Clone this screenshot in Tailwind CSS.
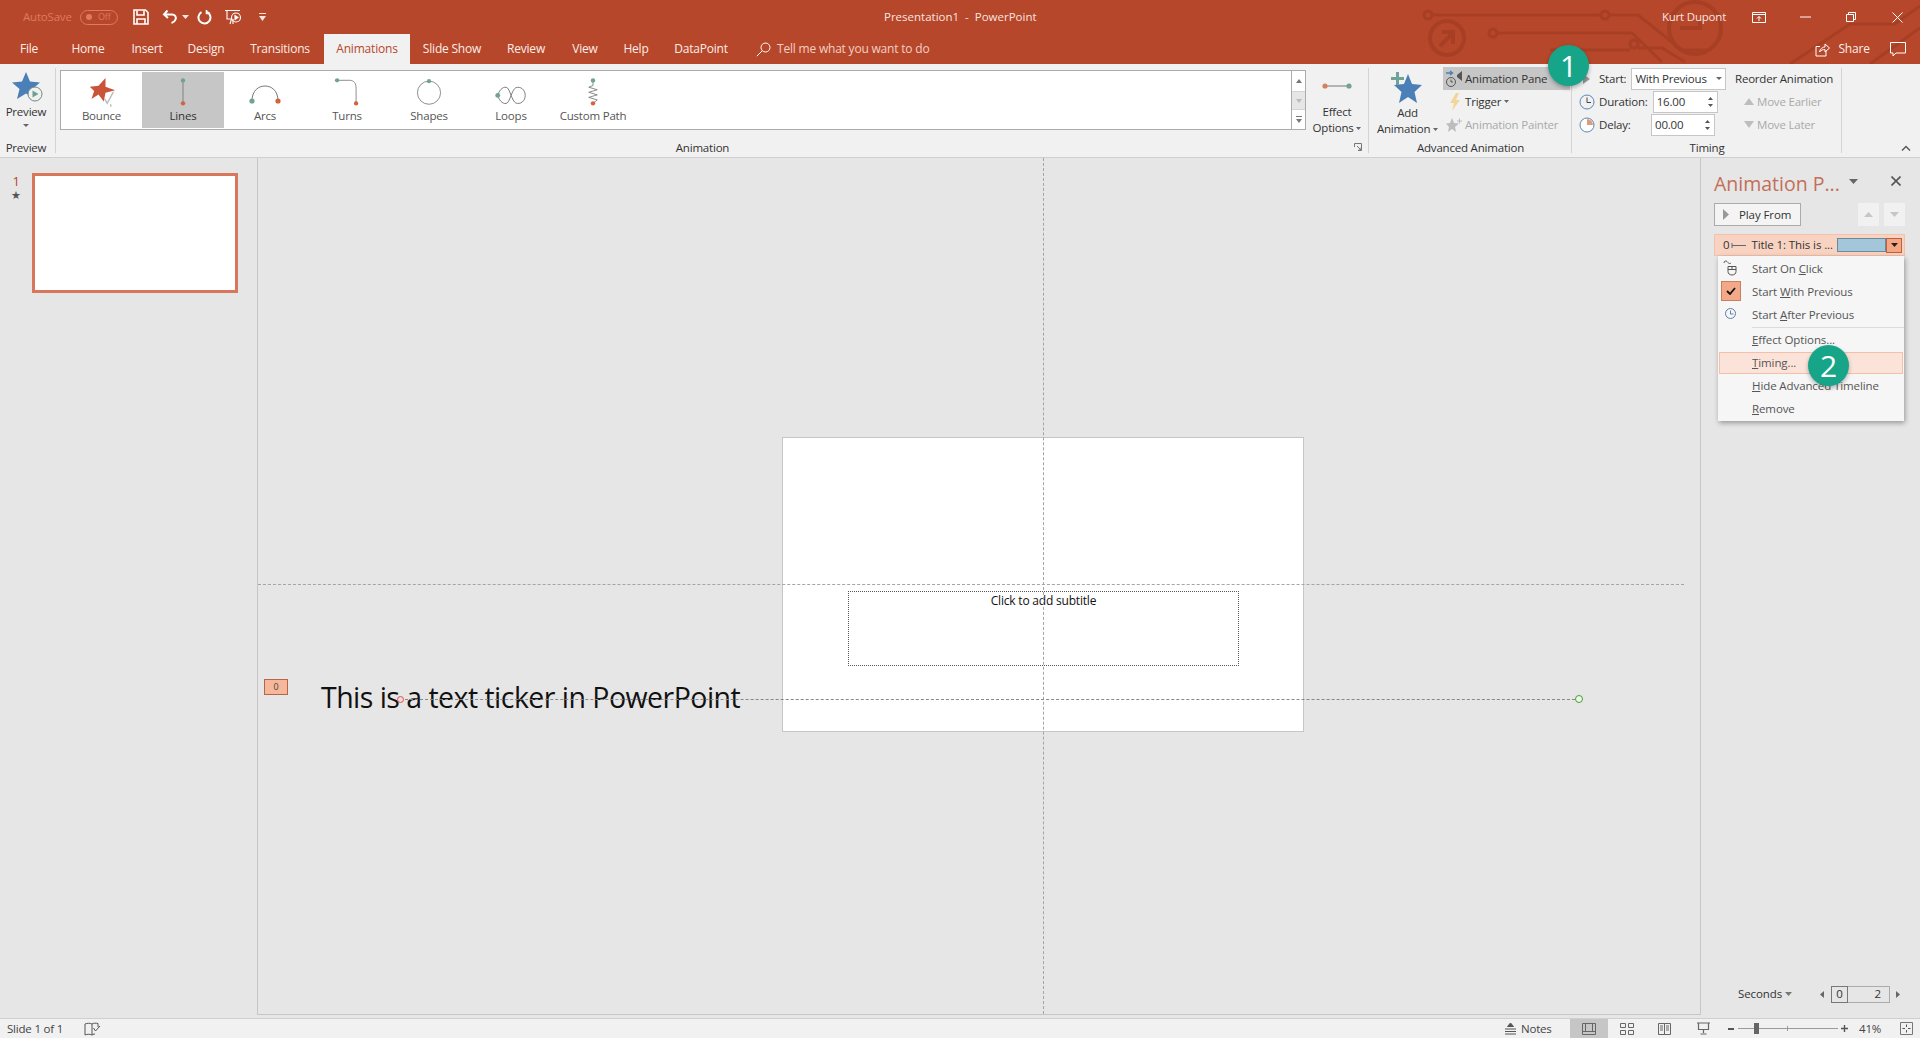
<!DOCTYPE html>
<html>
<head>
<meta charset="utf-8">
<script src="https://cdn.jsdelivr.net/npm/@tailwindcss/browser@4"></script>
</head>
<body class="m-0 overflow-hidden">
<div class="flex h-[1038px] w-[1920px] flex-col overflow-hidden bg-[#e6e6e6] font-['Open_Sans',sans-serif] text-[11.5px] tracking-[-0.2px] text-[#333]">

  <!-- red header -->
  <div class="relative h-[64px] shrink-0 overflow-hidden bg-[#b7472a]">
    <svg class="absolute left-[1400px] top-0" width="520" height="64" fill="none" stroke="#a73f25" stroke-width="3">
      <circle cx="28" cy="15" r="4"/><path d="M32 15H201"/><circle cx="205" cy="15" r="4"/><path d="M209 15H238L282 50H310"/>
      <circle cx="93" cy="33" r="4"/><path d="M97 33H232L262 62"/><circle cx="234" cy="44" r="4"/><path d="M150 50H230M238 48H262L285 62"/>
      <circle cx="47" cy="38" r="17" stroke-width="4"/><path d="M40 46L52 34M42 32H53V44" stroke-width="4"/>
      <circle cx="295" cy="28" r="26" stroke-width="4"/><path d="M280 28H300V20" stroke-width="4"/>
      <path d="M390 64L450 24H495L520 6M470 64L520 28"/>
    </svg>

    <div class="relative flex h-[34px] items-center text-[#f6e5e0]">
      <span class="ml-[23px] w-[54px] text-[#de7a60]">AutoSave</span>
      <span class="ml-[3px] flex h-[15px] w-[38px] items-center rounded-full border border-[#de7a60] text-[9px] text-[#de7a60]"><span class="ml-[5px] mr-[6px] h-[6px] w-[6px] rounded-full bg-[#de7a60]"></span>Off</span>
      <svg class="ml-[15px]" width="16" height="16" viewBox="0 0 16 16" fill="none" stroke="#fff" stroke-width="1.6"><path d="M1 1H12.5L15 3.5V15H1Z"/><path d="M4 1.5V6H11V1.5M4 15V10H12V15"/></svg>
      <svg class="ml-[13px]" width="17" height="16" viewBox="0 0 17 16" fill="none" stroke="#fff" stroke-width="2"><path d="M5.5 1.5L2 5.5L6 9M2.5 5.5H10C13 5.5 14.5 8 13.5 10.5C13 12 11.5 13.5 9.5 14"/></svg>
      <svg class="ml-[3px]" width="7" height="4"><path d="M0 0H7L3.5 4Z" fill="#f6e5e0"/></svg>
      <svg class="ml-[7px]" width="16" height="16" viewBox="0 0 16 16" fill="none" stroke="#fff" stroke-width="2"><path d="M5.5 3.2A6 6 0 1 0 11 3"/><path d="M10.5 1V4.5H14" stroke-width="1.6"/></svg>
      <svg class="ml-[13px]" width="18" height="18" viewBox="0 0 18 18" fill="none" stroke="#fff" stroke-width="1.1"><path d="M0 2.5H15M2 2.5V11H7M6.5 11L5 16M8 11V16"/><circle cx="11" cy="9.5" r="4.5"/><path d="M10 7.5V11.5L13 9.5Z" fill="#fff"/></svg>
      <svg class="ml-[16px]" width="7" height="8"><path d="M0 0H7V1H0ZM0 3H7L3.5 8Z" fill="#f6e5e0"/></svg>
      <span class="ml-[618px] w-[150px] whitespace-nowrap text-center tracking-normal">Presentation1&nbsp; -&nbsp; PowerPoint</span>
      <span class="ml-[627px] w-[66px] whitespace-nowrap text-center">Kurt Dupont</span>
      <svg class="ml-[25px]" width="14" height="11" viewBox="0 0 14 11" fill="none" stroke="#fff"><path d="M.5 .5H13.5V10.5H.5ZM.5 2.5H13.5M7 9V4.5M5 6.5L7 4.5L9 6.5"/></svg>
      <svg class="ml-[34px]" width="11" height="2"><path d="M0 1H11" stroke="#fff"/></svg>
      <svg class="ml-[35px]" width="10" height="10" viewBox="0 0 10 10" fill="none" stroke="#fff"><path d="M.5 2.5H7.5V9.5H.5ZM2.5 2.5V.5H9.5V7.5H7.5"/></svg>
      <svg class="ml-[36px]" width="11" height="11" viewBox="0 0 11 11" fill="none" stroke="#fff"><path d="M.5 .5L10.5 10.5M10.5 .5L.5 10.5"/></svg>
    </div>

    <div class="relative flex h-[30px] items-stretch text-[12px] text-[#fbeee9]">
      <span class="flex w-[58px] items-center justify-center">File</span>
      <span class="flex w-[60px] items-center justify-center">Home</span>
      <span class="flex w-[58px] items-center justify-center">Insert</span>
      <span class="flex w-[60px] items-center justify-center">Design</span>
      <span class="flex w-[88px] items-center justify-center">Transitions</span>
      <span class="flex w-[86px] items-center justify-center bg-[#f1f1f1] text-[#b7472a]">Animations</span>
      <span class="flex w-[84px] items-center justify-center">Slide Show</span>
      <span class="flex w-[64px] items-center justify-center">Review</span>
      <span class="flex w-[54px] items-center justify-center">View</span>
      <span class="flex w-[48px] items-center justify-center">Help</span>
      <span class="flex w-[82px] items-center justify-center">DataPoint</span>
      <svg class="ml-[14px] self-center" width="15" height="15" viewBox="0 0 15 15" fill="none" stroke="#fff"><circle cx="9.5" cy="5.5" r="4.5"/><path d="M6.3 8.7L.8 14.2"/></svg>
      <span class="ml-[6px] flex items-center text-[#f3cfc4]">Tell me what you want to do</span>
      <svg class="ml-[886px] self-center" width="15" height="15" viewBox="0 0 15 15" fill="none" stroke="#fff"><path d="M11 8.5V14H1V4.5H5M4.5 10C5 6.5 8 5 10 5V2L14.5 6L10 10V7.5C8 7.5 6 8 4.5 10Z"/></svg>
      <span class="ml-[8px] flex items-center">Share</span>
      <svg class="ml-[20px] self-center" width="16" height="15" viewBox="0 0 16 15" fill="none" stroke="#fff"><path d="M.5 .5H15.5V11H6L3 14V11H.5Z"/></svg>
    </div>
  </div>

  <!-- ribbon -->
  <div class="flex h-[94px] shrink-0 border-b border-[#cfcfcf] bg-[#f1f1f1]">
    <!-- preview -->
    <div class="relative flex w-[58px] shrink-0 flex-col items-center pr-[6px] before:absolute before:right-[2px] before:top-[4px] before:bottom-[4px] before:w-px before:bg-[#d4d4d4]">
      <svg class="ml-[6px] mt-[7px]" width="34" height="32" viewBox="0 0 34 32"><path d="M14 1L18 10.500L28 11.500L20.500 18L23 28L14 22.500L5 28L7.500 18L0 11.500L10 10.500Z" fill="#4a7fb8"/><circle cx="23" cy="23" r="7" fill="#f1f1f1" stroke="#6e8d84"/><path d="M20.500 19.500V26.500L26.500 23Z" fill="#70a090"/></svg>
      <span class="mt-[1px] leading-[16px]">Preview</span>
      <svg class="mt-[4px]" width="6" height="3"><path d="M0 0H6L3 3Z" fill="#666"/></svg>
      <span class="mt-auto h-[16px] leading-[14px]">Preview</span>
    </div>
    <!-- animation -->
    <div class="relative flex w-[1311px] shrink-0 flex-col before:absolute before:right-0 before:top-[4px] before:bottom-[4px] before:w-px before:bg-[#d4d4d4]">
      <div class="flex">
        <div class="ml-[2px] mt-[6px] flex h-[60px] w-[1232px] shrink-0 border border-[#ababab] bg-white pt-[1px]">
          <div class="flex h-[56px] w-[81px] flex-col items-center">
            <svg class="mt-[5px]" width="34" height="34" viewBox="0 0 34 34"><path d="M3 11L13 10L21 1L21 11L32 15L21 18L19 28L13 20L5 25L8 16Z" fill="#c9543a"/><path d="M20 25L23 30L30 17M27 31V34" fill="none" stroke="#bbb" stroke-width="1.600"/></svg>
            <span class="mt-auto pb-[4px] text-[#555]">Bounce</span>
          </div>
          <div class="flex h-[56px] w-[82px] flex-col items-center bg-[#c6c6c6]">
            <svg class="mt-[5px]" width="10" height="35" viewBox="0 0 10 35"><path d="M5 4V30" stroke="#777"/><circle cx="5" cy="4" r="2.600" fill="#6fa397"/><circle cx="5" cy="31" r="2.600" fill="#d16340"/></svg>
            <span class="mt-auto pb-[4px]">Lines</span>
          </div>
          <div class="flex h-[56px] w-[82px] flex-col items-center">
            <svg class="mt-[11px]" width="32" height="22" viewBox="0 0 32 22"><path d="M3 18C3 7 10 3 16 3S29 7 29 18" fill="none" stroke="#777"/><circle cx="3" cy="18" r="2.600" fill="#6fa397"/><circle cx="29" cy="18" r="2.600" fill="#d16340"/></svg>
            <span class="mt-auto pb-[4px] text-[#555]">Arcs</span>
          </div>
          <div class="flex h-[56px] w-[82px] flex-col items-center">
            <svg class="mt-[5px]" width="30" height="36" viewBox="0 0 30 36"><path d="M3 4H18C24 4 26 8 26 14V32" fill="none" stroke="#777"/><circle cx="3" cy="4" r="2.600" fill="#6fa397"/><circle cx="26" cy="32" r="2.600" fill="#d16340"/></svg>
            <span class="mt-auto pb-[4px] text-[#555]">Turns</span>
          </div>
          <div class="flex h-[56px] w-[82px] flex-col items-center">
            <svg class="mt-[5px]" width="30" height="36" viewBox="0 0 30 36"><circle cx="15" cy="19" r="14" fill="none" stroke="#777"/><circle cx="15" cy="5" r="2.600" fill="#6fa397"/></svg>
            <span class="mt-auto pb-[4px] text-[#555]">Shapes</span>
          </div>
          <div class="flex h-[56px] w-[82px] flex-col items-center">
            <svg class="mt-[12px]" width="34" height="24" viewBox="0 0 34 24"><path d="M3 12C5 5 10 2 13 4C16 6 18 18 22 20C27 22 32 18 32 12S27 2 22 4C18 6 16 18 13 20C10 22 5 19 3 12Z" fill="none" stroke="#777"/><circle cx="3" cy="12" r="2.600" fill="#6fa397"/></svg>
            <span class="mt-auto pb-[4px] text-[#555]">Loops</span>
          </div>
          <div class="flex h-[56px] w-[82px] flex-col items-center">
            <svg class="mt-[5px]" width="14" height="35" viewBox="0 0 14 35"><path d="M7 4V10L2 12L12 15L2 18L12 21L2 24L12 27L7 31" fill="none" stroke="#777"/><circle cx="7" cy="4" r="2.600" fill="#6fa397"/><circle cx="7" cy="31" r="2.600" fill="#d16340"/></svg>
            <span class="mt-auto whitespace-nowrap pb-[4px] text-[#555]">Custom Path</span>
          </div>
        </div>
        <div class="mt-[6px] flex h-[60px] w-[14px] shrink-0 flex-col border-y border-r border-[#ababab]">
          <span class="flex h-[20px] items-center justify-center bg-white"><svg width="6" height="4"><path d="M0 4H6L3 0Z" fill="#777"/></svg></span>
          <span class="flex h-[19px] items-center justify-center border-y border-[#d4d4d4] bg-[#e6e6e6]"><svg width="6" height="4"><path d="M0 0H6L3 4Z" fill="#bbb"/></svg></span>
          <span class="flex flex-1 items-center justify-center bg-white"><svg width="6" height="7"><path d="M0 0H6V1H0ZM0 3H6L3 7Z" fill="#777"/></svg></span>
        </div>
        <div class="flex w-[62px] shrink-0 flex-col items-center">
          <svg class="mt-[18px]" width="30" height="8" viewBox="0 0 30 8"><path d="M3 4H27" stroke="#777"/><circle cx="3" cy="4" r="2.600" fill="#d1835f"/><circle cx="27" cy="4" r="2.600" fill="#6fa397"/></svg>
          <span class="mt-[14px] leading-[16px]">Effect</span>
          <span class="whitespace-nowrap leading-[16px]">Options <svg class="inline align-middle" width="5" height="3"><path d="M0 0H5L2.500 3Z" fill="#666"/></svg></span>
        </div>
      </div>
      <div class="relative mt-auto flex h-[16px] justify-center pr-[22px] leading-[14px]">
        Animation
        <svg class="absolute right-[7px] top-[2px]" width="8" height="8" viewBox="0 0 8 8" fill="none" stroke="#777"><path d="M.5 4V.5H7.500V7.500H4M3 3L7 7M4.500 7H7V4.500"/></svg>
      </div>
    </div>
    <!-- advanced animation -->
    <div class="relative flex w-[203px] shrink-0 flex-col before:absolute before:right-0 before:top-[4px] before:bottom-[4px] before:w-px before:bg-[#d4d4d4]">
      <div class="flex">
        <div class="flex w-[74px] flex-col items-center">
          <svg class="mt-[7px]" width="32" height="32" viewBox="0 0 32 32"><path d="M18 3L22 13L32 14L24.500 21L27 32L18 26L9 32L11.500 21L4 14L14 13Z" fill="#4a7fb8"/><path d="M1 6H6V1H9V6H14V9H9V14H6V9H1Z" fill="#6fa397"/></svg>
          <span class="ml-[3px] mt-[2px] leading-[16px]">Add</span>
          <span class="ml-[3px] whitespace-nowrap leading-[16px]">Animation <svg class="inline align-middle" width="5" height="3"><path d="M0 0H5L2.500 3Z" fill="#666"/></svg></span>
        </div>
        <div class="mt-[3px] flex w-[127px] flex-col">
          <div class="flex h-[23px] items-center bg-[#c6c6c6]">
            <svg class="ml-[2px]" width="18" height="18" viewBox="0 0 18 18" fill="none"><path d="M1 3H7M5 1L7.500 3L5 5" stroke="#4a7fb8" stroke-width="1.400"/><circle cx="6" cy="12" r="4.500" stroke="#555"/><path d="M6 9.500V12H8" stroke="#555"/><path d="M12 5L17 1V11L12 7Z" fill="#555"/></svg>
            <span class="ml-[2px] whitespace-nowrap">Animation Pane</span>
          </div>
          <div class="flex h-[23px] items-center">
            <svg class="ml-[6px]" width="12" height="18" viewBox="0 0 12 18"><path d="M7 0L1 10H5L3 18L11 7H7L10 0Z" fill="#f3d59a"/></svg>
            <span class="ml-[4px]">Trigger</span>
            <svg class="ml-[3px]" width="5" height="3"><path d="M0 0H5L2.500 3Z" fill="#666"/></svg>
          </div>
          <div class="flex h-[23px] items-center text-[#a9a9a9]">
            <svg class="ml-[3px]" width="17" height="16" viewBox="0 0 17 16"><path d="M6 1L8 6L13 6.500L9 10L10 15L6 12L2 15L3 10L0 6.500L4 6Z" fill="#bdbdbd"/><path d="M11 4H16M13.500 1.500V6.500" stroke="#bdbdbd"/></svg>
            <span class="ml-[2px] whitespace-nowrap">Animation Painter</span>
          </div>
        </div>
      </div>
      <div class="mt-auto h-[16px] text-center leading-[14px]">Advanced Animation</div>
    </div>
    <!-- timing -->
    <div class="relative flex w-[270px] shrink-0 flex-col before:absolute before:right-0 before:top-[4px] before:bottom-[4px] before:w-px before:bg-[#d4d4d4]">
      <div class="mt-[3px] flex">
        <div class="flex w-[158px] flex-col">
          <div class="flex h-[23px] items-center">
            <svg class="ml-[11px]" width="7" height="10"><path d="M0 0L7 5L0 10Z" fill="#999"/></svg>
            <span class="ml-[9px]">Start:</span>
            <span class="ml-[5px] flex h-[22px] w-[95px] items-center justify-between border border-[#c6c6c6] bg-white px-[3px] text-[11.500px]">With Previous<svg width="6" height="3"><path d="M0 0H6L3 3Z" fill="#666"/></svg></span>
          </div>
          <div class="flex h-[23px] items-center">
            <svg class="ml-[7px]" width="16" height="16" viewBox="0 0 16 16" fill="none" stroke="#5588b8"><circle cx="8" cy="8" r="7"/><path d="M8 3.500V8.500H12" stroke="#444"/></svg>
            <span class="ml-[4px]">Duration:</span>
            <span class="ml-[5px] flex h-[22px] w-[65px] items-center justify-between border border-[#c6c6c6] bg-white pl-[3px] pr-[4px]">16.00<span class="flex flex-col gap-[4px]"><svg class="block" width="5" height="3"><path d="M0 3H5L2.500 0Z" fill="#555"/></svg><svg class="block" width="5" height="3"><path d="M0 0H5L2.500 3Z" fill="#555"/></svg></span></span>
          </div>
          <div class="flex h-[23px] items-center">
            <svg class="ml-[7px]" width="16" height="16" viewBox="0 0 16 16"><circle cx="8" cy="8" r="7" fill="#fff" stroke="#5588b8"/><path d="M8 2A6 6 0 0 1 14 8H8Z" fill="#e39a77"/></svg>
            <span class="ml-[4px] w-[52px]">Delay:</span>
            <span class="flex h-[22px] w-[64px] items-center justify-between border border-[#c6c6c6] bg-white pl-[3px] pr-[4px]">00.00<span class="flex flex-col gap-[4px]"><svg class="block" width="5" height="3"><path d="M0 3H5L2.500 0Z" fill="#555"/></svg><svg class="block" width="5" height="3"><path d="M0 0H5L2.500 3Z" fill="#555"/></svg></span></span>
          </div>
        </div>
        <div class="ml-[5px] flex w-[107px] flex-col">
          <div class="flex h-[23px] items-center whitespace-nowrap">Reorder Animation</div>
          <div class="flex h-[23px] items-center text-[#a9a9a9]"><svg class="ml-[9px]" width="10" height="7"><path d="M0 7H10L5 0Z" fill="#bdbdbd"/></svg><span class="ml-[3px]">Move Earlier</span></div>
          <div class="flex h-[23px] items-center text-[#a9a9a9]"><svg class="ml-[9px]" width="10" height="7"><path d="M0 0H10L5 7Z" fill="#bdbdbd"/></svg><span class="ml-[3px]">Move Later</span></div>
        </div>
      </div>
      <div class="mt-auto h-[16px] text-center leading-[14px]">Timing</div>
    </div>
    <div class="flex flex-1 items-end justify-end pb-[6px] pr-[9px]">
      <svg width="10" height="6" viewBox="0 0 10 6" fill="none" stroke="#555" stroke-width="1.400"><path d="M1 5.500L5 1.500L9 5.500"/></svg>
    </div>
  </div>

  <!-- workspace -->
  <div class="flex min-h-0 flex-1">
    <!-- thumbnails -->
    <div class="mb-[3px] flex w-[258px] shrink-0 border-r border-[#c6c6c6]">
      <div class="w-[32px] pt-[16px] text-center text-[13px] leading-[14px] text-[#b7472a]">1<div class="mt-[2px] text-[11px] leading-[10px] text-[#555]">★</div></div>
      <div class="mt-[15px] h-[120px] w-[206px] border-[3px] border-[#d8775c] bg-white"></div>
    </div>
    <!-- canvas -->
    <div class="relative mb-[3px] min-w-0 flex-1 border-b border-[#c6c6c6]">
      <div class="absolute left-[524px] top-[279px] h-[295px] w-[522px] border border-[#c6c6c6] bg-white"></div>
      <div class="absolute left-[590px] top-[433px] flex h-[75px] w-[391px] justify-center border border-dotted border-[#555] text-[12px] leading-[14px] text-[#111]"><span class="mt-[2px]">Click to add subtitle</span></div>
      <div class="absolute left-0 top-[426px] w-[1426px] border-t border-dashed border-[#a5a5a5]"></div>
      <div class="absolute left-[785px] top-0 h-[856px] border-l border-dashed border-[#a5a5a5]"></div>
      <div class="absolute left-[6px] top-[521px] flex h-[16px] w-[24px] items-center justify-center border border-[#b5664a] bg-[#f6b79a] text-[9px] text-[#444]">0</div>
      <div class="absolute left-[63px] top-[519px] whitespace-nowrap text-[28.500px] leading-[40px] tracking-[-0.53px] text-[#111]">This is a text ticker in PowerPoint</div>
      <div class="absolute left-[142px] top-[541px] w-[1175px] border-t border-dashed border-[#888]"></div>
      <div class="absolute left-[139px] top-[538px] h-[7px] w-[7px] rounded-full border border-[#d9534f] bg-[#f3d9d5]"></div>
      <div class="absolute left-[1317px] top-[537px] h-[8px] w-[8px] rounded-full border border-[#46a030] bg-[#eef6ec]"></div>
    </div>
    <!-- animation pane -->
    <div class="relative mb-[3px] flex w-[220px] shrink-0 flex-col border-l border-[#c6c6c6] pl-[13px] pr-[15px] tracking-[-0.1px]">
      <div class="flex h-[45px] items-center pt-[7px]">
        <span class="whitespace-nowrap text-[19.500px] tracking-normal text-[#c26f58]">Animation P...</span>
        <svg class="ml-[9px] mb-[6px]" width="9" height="5"><path d="M0 0H9L4.500 5Z" fill="#666"/></svg>
        <svg class="ml-[33px] mb-[6px]" width="10" height="10" viewBox="0 0 10 10" fill="none" stroke="#555" stroke-width="1.600"><path d="M.5 .5L9.500 9.500M9.500 .5L.5 9.500"/></svg>
      </div>
      <div class="flex h-[23px] items-stretch">
        <span class="flex w-[87px] items-center border border-[#ababab] bg-[#f4f4f4] pl-[8px]"><svg width="6" height="11"><path d="M0 0L6 5.500L0 11Z" fill="#999"/></svg><span class="ml-[10px]">Play From</span></span>
        <span class="ml-[57px] flex w-[21px] items-center justify-center bg-[#f1f1f1]"><svg width="9" height="5"><path d="M0 5H9L4.500 0Z" fill="#c6c6c6"/></svg></span>
        <span class="ml-[5px] flex w-[21px] items-center justify-center bg-[#f1f1f1]"><svg width="9" height="5"><path d="M0 0H9L4.500 5Z" fill="#c6c6c6"/></svg></span>
      </div>
      <div class="mt-[8px] flex h-[22px] w-[191px] items-center border border-[#f3c2ad] bg-[#f9d3c2] pl-[8px]">
        <span>0</span>
        <svg class="ml-[2px]" width="15" height="7"><path d="M1 1V6M1 3.500H15" stroke="#666"/></svg>
        <span class="ml-[5px] w-[86px] whitespace-nowrap">Title 1: This is ...</span>
        <span class="h-[14px] w-[49px] border border-[#6a8a9e] bg-[#a3c6db]"></span>
        <span class="flex h-[15px] w-[16px] items-center justify-center border border-[#c0603f] bg-[#f5a683]"><svg width="7" height="4"><path d="M0 0H7L3.500 4Z" fill="#222"/></svg></span>
      </div>
      <!-- context menu -->
      <div class="absolute left-[17px] top-[98px] w-[186px] bg-[#f6f6f6] py-[1px] text-[#555] shadow-[1px_2px_5px_rgba(0,0,0,0.35)]">
        <div class="flex h-[23px] items-center pl-[34px]">Start On&nbsp;<u>C</u>lick</div>
        <div class="relative flex h-[23px] items-center pl-[34px]">
          <span class="absolute left-[3px] top-[1px] flex h-[20px] w-[20px] items-center justify-center border border-[#c9805f] bg-[#f3a988]"><svg width="10" height="8" viewBox="0 0 10 8" fill="none" stroke="#111" stroke-width="1.800"><path d="M1 4L4 7L9 1"/></svg></span>
          Start&nbsp;<u>W</u>ith Previous
        </div>
        <div class="flex h-[23px] items-center pl-[34px]">Start&nbsp;<u>A</u>fter Previous</div>
        <div class="mt-[1px] ml-[34px] border-t border-[#dcdcdc]"></div>
        <div class="mb-[1px] flex h-[23px] items-center pl-[34px]"><u>E</u>ffect Options...</div>
        <div class="mx-[1px] flex h-[22px] items-center border border-[#f4c0aa] bg-[#fce3da] pl-[32px]"><u>T</u>iming...</div>
        <div class="flex h-[23px] items-center pl-[34px]"><u>H</u>ide Advanced Timeline</div>
        <div class="flex h-[23px] items-center pl-[34px]"><u>R</u>emove</div>
        <svg class="absolute left-[5px] top-[4px]" width="14" height="16" viewBox="0 0 14 16" fill="none" stroke="#555"><path d="M5 6.500H13V11.500C13 13.500 11.500 15 9 15S5 13.500 5 11.500ZM5 9.500H13M9 6.500V9.500M1 3C1 1 3 .5 4 1.500S6 4.500 8 3"/></svg>
        <svg class="absolute left-[7px] top-[52px]" width="11" height="11" viewBox="0 0 11 11" fill="none" stroke="#5d7ea5"><circle cx="5.500" cy="5.500" r="5"/><path d="M5.500 2.500V6H8.500"/></svg>
      </div>
      <div class="mt-auto mb-[11px] flex h-[20px] items-center">
        <span class="ml-[24px]">Seconds</span>
        <svg class="ml-[3px]" width="7" height="4"><path d="M0 0H7L3.500 4Z" fill="#777"/></svg>
        <svg class="ml-[28px]" width="4" height="7"><path d="M4 0V7L0 3.500Z" fill="#666"/></svg>
        <span class="ml-[7px] flex h-[17px] w-[59px] items-stretch border border-[#ababab]"><span class="-my-px -ml-px flex w-[17px] items-center justify-center border border-[#777]">0</span><span class="flex flex-1 items-center justify-end pr-[8px]">2</span></span>
        <svg class="ml-[6px]" width="4" height="7"><path d="M0 0V7L4 3.500Z" fill="#666"/></svg>
      </div>
    </div>
  </div>

  <!-- status bar -->
  <div class="flex h-[20px] shrink-0 items-center border-t border-[#cfcfcf] bg-[#f1f1f1] text-[#444]">
    <span class="ml-[7px] w-[60px] whitespace-nowrap">Slide 1 of 1</span>
    <svg class="ml-[17px]" width="18" height="14" viewBox="0 0 18 14" fill="none" stroke="#555"><path d="M1 2C3 1 6 1 8 2V13C6 12 3 12 1 13ZM8 2C9.500 1 12 1 14 1.500V5M8 13L10 12H11M9.500 6L11.500 9L16 4"/></svg>
    <svg class="ml-[1402px]" width="13" height="13" viewBox="0 0 13 13" fill="none" stroke="#555"><path d="M1 7H12M1 9.500H12M1 12H12"/><path d="M3.500 4.500L6.500 1L9.500 4.500Z" fill="#555"/></svg>
    <span class="ml-[4px] w-[32px]">Notes</span>
    <span class="ml-[17px] flex h-[19px] w-[38px] items-center justify-center bg-[#c6c6c6]"><svg width="14" height="12" viewBox="0 0 14 12" fill="none" stroke="#666"><path d="M.5 .5H13.500V11.500H.5ZM3.500 .5V8.500H10.500V.5M.5 8.500H13.500"/></svg></span>
    <svg class="ml-[12px]" width="14" height="12" viewBox="0 0 14 12" fill="none" stroke="#666"><path d="M.5 .5H5.500V4.500H.5ZM8.500 .5H13.500V4.500H8.500ZM.5 7.500H5.500V11.500H.5ZM8.500 7.500H13.500V11.500H8.500Z"/></svg>
    <svg class="ml-[24px]" width="13" height="12" viewBox="0 0 13 12" fill="none" stroke="#666"><path d="M.5 .5H6.500V11.500H.5ZM6.500 .5H12.500V11.500H6.500ZM2 3H5M2 5H5M2 7H5M8 3H11M8 5H11M8 7H11"/></svg>
    <svg class="ml-[26px]" width="13" height="13" viewBox="0 0 13 13" fill="none" stroke="#666"><path d="M0 1H13M1.500 1.500V7.500H11.500V1.500M6.500 7.500V11M3.500 12H9.500" stroke-width="1.200"/></svg>
    <svg class="ml-[18px]" width="6" height="2"><path d="M0 1H6" stroke="#555" stroke-width="2"/></svg>
    <span class="relative ml-[4px] h-px w-[100px] bg-[#9a9a9a]">
      <span class="absolute left-[16px] top-[-5px] h-[11px] w-[5px] bg-[#666]"></span>
      <span class="absolute left-[49px] top-[-2px] h-[5px] w-px bg-[#9a9a9a]"></span>
    </span>
    <svg class="ml-[3px]" width="7" height="7"><path d="M3.500 0V7M0 3.500H7" stroke="#555" stroke-width="1.400"/></svg>
    <span class="ml-[11px] w-[22px]">41%</span>
    <svg class="ml-[19px]" width="13" height="13" viewBox="0 0 13 13" fill="none" stroke="#777"><path d="M.5 .5H12.500V12.500H.5Z"/><path d="M6.500 2.500V5M6.500 8V10.500M2.500 6.500H5M8 6.500H10.500" stroke="#555"/></svg>
  </div>

  <!-- callout badges over the page -->
  <div class="absolute left-[1548px] top-[45px] flex h-[41px] w-[41px] items-center justify-center rounded-full bg-[#17a589] text-[30px] tracking-normal text-white shadow-[0_2px_4px_rgba(0,0,0,0.3)]">1</div>
  <div class="absolute left-[1808px] top-[345px] flex h-[41px] w-[41px] items-center justify-center rounded-full bg-[#17a589] text-[30px] tracking-normal text-white shadow-[0_2px_4px_rgba(0,0,0,0.3)]">2</div>
</div>
</body>
</html>
